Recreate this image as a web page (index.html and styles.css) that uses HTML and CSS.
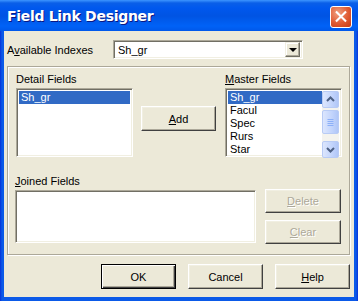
FILE: index.html
```html
<!DOCTYPE html>
<html lang="en">
  <head>
    <meta charset="UTF-8" />
    <title>Field Link Designer</title>
    <link rel="stylesheet" href="styles.css">
  </head>
  <body>
    <div class="window">
      <div class="titlebar">
        <span class="title">Field Link Designer</span>
        <div class="close-btn">
          <svg viewBox="0 0 21 21" width="21" height="21">
            <path d="M6 6L15 15M15 6L6 15" stroke="#fff" stroke-width="2.2" stroke-linecap="square" />
          </svg>
        </div>
      </div>

      <div class="client">
        <div class="index-row">
          <label class="index-label">A<u>v</u>ailable Indexes</label>
          <div class="combo">
            <span class="combo-text">Sh_gr</span>
            <div class="combo-btn"><span class="arrow"></span></div>
          </div>
        </div>

        <div class="group">
          <div class="group-top">
            <div class="field-col">
              <div class="field-label">Detail Fields</div>
              <div class="listbox list-small">
                <div class="list-item selected">Sh_gr</div>
              </div>
            </div>
            <button class="btn add-btn"><u>A</u>dd</button>
            <div class="field-col">
              <div class="field-label"><u>M</u>aster Fields</div>
              <div class="listbox list-small with-scroll">
                <div class="list-items">
                  <div class="list-item selected">Sh_gr</div>
                  <div class="list-item">Facul</div>
                  <div class="list-item">Spec</div>
                  <div class="list-item">Rurs</div>
                  <div class="list-item">Star</div>
                </div>
                <div class="scrollbar">
                  <div class="sb-btn">
                    <svg viewBox="0 0 15 15" width="15" height="15"><path d="M4 9L7.5 5.5L11 9" stroke="#4D6185" stroke-width="2" fill="none" /></svg>
                  </div>
                  <div class="sb-track">
                    <div class="sb-thumb">
                      <svg viewBox="0 0 15 22" width="15" height="22"><path d="M4.5 8.5h6M4.5 10.5h6M4.5 12.5h6M4.5 14.5h6" stroke="#8CB0F8" stroke-width="1" /></svg>
                    </div>
                  </div>
                  <div class="sb-btn">
                    <svg viewBox="0 0 15 15" width="15" height="15"><path d="M4 6L7.5 9.5L11 6" stroke="#4D6185" stroke-width="2" fill="none" /></svg>
                  </div>
                </div>
              </div>
            </div>
          </div>

          <div class="group-bottom">
            <div class="joined-col">
              <div class="field-label"><u>J</u>oined Fields</div>
              <div class="listbox list-joined"></div>
            </div>
            <div class="side-buttons">
              <button class="btn btn-side" disabled><u>D</u>elete</button>
              <button class="btn btn-side" disabled><u>C</u>lear</button>
            </div>
          </div>
        </div>

        <div class="dialog-buttons">
          <button class="btn btn-default">OK</button>
          <button class="btn">Cancel</button>
          <button class="btn"><u>H</u>elp</button>
        </div>
      </div>
    </div>
  </body>
</html>
```

FILE: styles.css
```css
* {
  margin: 0;
  padding: 0;
  box-sizing: border-box;
}

body {
  font-family: "Liberation Sans", Arial, sans-serif;
  font-size: 11px;
  color: #000;
  background: #fff;
}

.window {
  width: 358px;
  height: 301px;
  display: flex;
  flex-direction: column;
  background: linear-gradient(to right, #0831d9, #0b5ae8 2px, #0b5ae8 calc(100% - 2px), #0831d9);
}

.titlebar {
  height: 31px;
  display: flex;
  align-items: center;
  justify-content: space-between;
  padding: 0 6px 0 7px;
  background: linear-gradient(
    #3d95ff 0,
    #0a5fe8 3px,
    #0058ee 8px,
    #0054e3 16px,
    #0062f7 26px,
    #0058ea 31px
  );
}

.title {
  font-family: "DejaVu Sans", Verdana, sans-serif;
  font-weight: bold;
  font-size: 14px;
  letter-spacing: -0.3px;
  color: #fff;
  text-shadow: 1px 1px 0 #0a1883;
  margin-top: 1px;
}

.close-btn {
  width: 22px;
  height: 22px;
  border: 1px solid #fff;
  border-radius: 3px;
  background: radial-gradient(circle at 35% 30%, #f0a080, #e05a32 55%, #c23a14);
  display: flex;
  align-items: center;
  justify-content: center;
  margin-top: 2px;
}

.close-btn svg {
  display: block;
}

.client {
  flex: 1;
  margin: 0 4px 4px 4px;
  background: #ece9d8;
  padding: 9px 0 0 3px;
}

.index-row {
  display: flex;
  align-items: center;
  height: 19px;
}

.index-label {
  width: 106px;
}

.combo {
  width: 190px;
  height: 19px;
  background: #fff;
  border: 1px solid;
  border-color: #aca899 #fff #fff #aca899;
  box-shadow: inset 1px 1px 0 #716f64, inset -1px -1px 0 #f1efe2;
  display: flex;
  align-items: center;
  justify-content: space-between;
  padding: 0 2px 0 4px;
}

.combo-btn {
  width: 15px;
  height: 15px;
  background: #ece9d8;
  border: 1px solid;
  border-color: #f1efe2 #716f64 #716f64 #f1efe2;
  box-shadow: inset -1px -1px 0 #aca899, inset 1px 1px 0 #fff;
  display: flex;
  align-items: center;
  justify-content: center;
}

.arrow {
  width: 0;
  height: 0;
  border-left: 4px solid transparent;
  border-right: 4px solid transparent;
  border-top: 4px solid #000;
  margin-top: 1px;
}

.group {
  margin-top: 7px;
  width: 343px;
  height: 189px;
  border: 1px solid #aca899;
  box-shadow: 1px 1px 0 #fff, inset 1px 1px 0 #fff;
}

.group-top {
  display: flex;
  padding: 6px 0 0 8px;
}

.field-col {
  width: 117px;
}

.field-label {
  height: 13px;
  line-height: 13px;
  margin-bottom: 2px;
}

.listbox {
  background: #fff;
  border: 1px solid;
  border-color: #aca899 #fff #fff #aca899;
  box-shadow: inset 1px 1px 0 #716f64, inset -1px -1px 0 #f1efe2;
  padding: 2px;
}

.list-small {
  height: 69px;
}

.with-scroll {
  display: flex;
  padding: 2px 2px 2px 2px;
}

.list-items {
  flex: 1;
}

.list-item {
  height: 13px;
  line-height: 13px;
  padding-left: 2px;
  white-space: nowrap;
}

.list-item.selected {
  background: #316ac5;
  color: #fff;
}

.scrollbar {
  width: 17px;
  display: flex;
  flex-direction: column;
  background: #f4f3ee;
}

.sb-btn,
.sb-thumb {
  border: 1px solid #b8cbf5;
  border-radius: 2px;
  background: linear-gradient(to right, #dce6fd, #c2d4fc 60%, #b0c6f7);
  display: flex;
  align-items: center;
  justify-content: center;
}

.sb-btn {
  height: 17px;
}

.sb-track {
  flex: 1;
  display: flex;
  flex-direction: column;
  padding: 2px 0 7px;
}

.sb-thumb {
  height: 24px;
}

.btn {
  font-family: "Liberation Sans", Arial, sans-serif;
  font-size: 11px;
  color: #000;
  background: #ece9d8;
  width: 75px;
  height: 25px;
  border: 1px solid;
  border-color: #fff #404040 #404040 #fff;
  box-shadow: inset -1px -1px 0 #aca899, inset 1px 1px 0 #f1efe2;
}

.btn:disabled {
  color: #aca899;
  text-shadow: 1px 1px 0 #fff;
}

.add-btn {
  margin: 33px 9px 0 8px;
}

.group-bottom {
  display: flex;
  padding: 18px 0 0 7px;
}

.joined-col {
  width: 241px;
}

.list-joined {
  height: 53px;
}

.side-buttons {
  display: flex;
  flex-direction: column;
  gap: 7px;
  margin: 14px 0 0 9px;
}

.btn-side {
  width: 76px;
  height: 24px;
}

.dialog-buttons {
  display: flex;
  justify-content: flex-end;
  gap: 12px;
  margin-top: 9px;
  padding-right: 4px;
}

.btn-default {
  border-color: #000;
  box-shadow: inset 1px 1px 0 #fff, inset -1px -1px 0 #404040, inset -2px -2px 0 #aca899;
}
```
